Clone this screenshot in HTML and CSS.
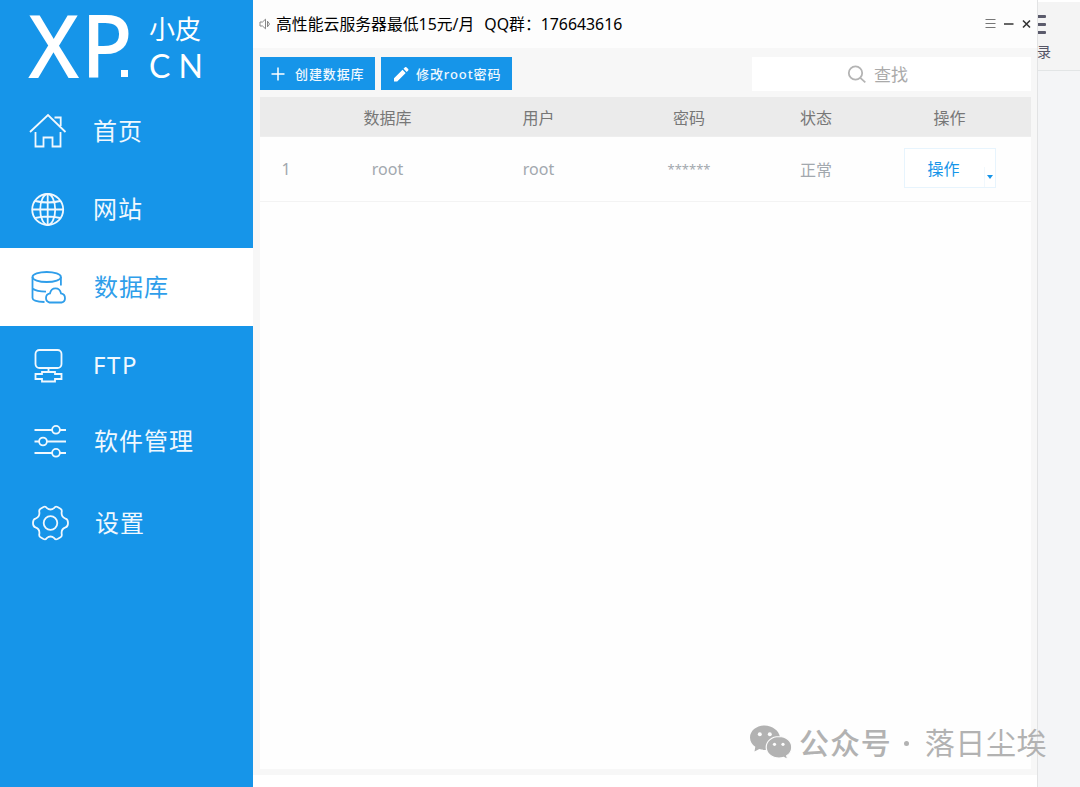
FILE: index.html
```html
<!DOCTYPE html>
<html lang="zh-CN">
<head>
    <meta charset="UTF-8">
    <meta name="viewport" content="width=device-width, initial-scale=1.0">
    <title>小皮面板 - 数据库</title>
    <link rel="stylesheet" href="styles.css">
</head>
<body>

<div class="screen">
    <aside class="sidebar">
        <div class="logo">
            <div class="logo-main"><span class="logo-xp">XP</span><span class="logo-dot"></span></div>
            <div class="logo-side">
                <span class="logo-cn">小皮</span>
                <span class="logo-en">CN</span>
            </div>
        </div>
        <nav class="menu">
            <a class="menu-item">
                <svg class="icon" width="40" height="40" viewBox="0 0 40 40">
                    <path d="M2 21 20 4l17.500 17M26.500 6.500h6.200v8.500M7.500 21v14.500h8v-9h9v9h8v-14.500"/>
                </svg>
                <span>首页</span>
            </a>
            <a class="menu-item">
                <svg class="icon" width="40" height="40" viewBox="0 0 40 40">
                    <circle cx="19.700" cy="20.500" r="15.500"/>
                    <ellipse cx="19.700" cy="20.500" rx="7.500" ry="15.500"/>
                    <path d="M19.700 5v31M4.200 20.500h31M7.200 12q12.500 3 25 0M7.200 29q12.500-3 25 0"/>
                </svg>
                <span>网站</span>
            </a>
            <a class="menu-item active">
                <svg class="icon" width="40" height="40" viewBox="0 0 40 40">
                    <ellipse cx="18.700" cy="10" rx="14.200" ry="5"/>
                    <path d="M4.500 10v21q0 3.500 12 4M32.900 10v8.500M4.500 21.500q4 3 13.500 3.200M21.500 35.500q-3.500-.8-3.500-4.400 0-4 4-4.700 1-5 5.500-5t5.500 5q4 .7 4 4.800 0 3.500-3.500 4.300z"/>
                </svg>
                <span>数据库</span>
            </a>
            <a class="menu-item menu-ftp">
                <svg class="icon" width="40" height="40" viewBox="0 0 40 40">
                    <rect x="7.500" y="4" width="26" height="18" rx="4"/>
                    <path d="M20.500 22v4M14 26h13v2h6.500v5h-6.500v2.500h-13v-2.500h-6.500v-5h6.500z"/>
                </svg>
                <span>FTP</span>
            </a>
            <a class="menu-item menu-soft">
                <svg class="icon" width="40" height="40" viewBox="0 0 40 40">
                    <path d="M6.500 8h17.500M32 8h6M6.500 19.500h4.500M19 19.500h19M6.500 31h17.500M32 31h6"/>
                    <circle cx="28" cy="7.800" r="3.900"/>
                    <circle cx="15" cy="19.500" r="3.900"/>
                    <circle cx="28" cy="30.800" r="3.900"/>
                </svg>
                <span>软件管理</span>
            </a>
            <a class="menu-item menu-set">
                <svg class="icon" width="42" height="40" viewBox="0 0 42 40">
                    <path d="M15.500 4q2-1 3.200.8 3.800 3.400 7.600 0 1.200-1.800 3.200-.8l3 1.700q1.700 1 1.200 3.200-.8 5 3.800 6.700 2.500.6 2.500 4.400t-2.500 4.400q-4.600 1.700-3.800 6.700.5 2.200-1.200 3.200l-3 1.700q-2 1-3.200-.8-3.800-3.400-7.600 0-1.200 1.800-3.200.8l-3-1.700q-1.700-1-1.200-3.200.8-5-3.800-6.700-2.500-.6-2.500-4.400t2.500-4.400q4.600-1.700 3.800-6.700-.5-2.200 1.200-3.200z"/>
                    <circle cx="22.500" cy="20" r="6.800"/>
                </svg>
                <span>设置</span>
            </a>
        </nav>
    </aside>

    <main class="window">
        <header class="titlebar">
            <svg class="speaker" width="12" height="12" viewBox="0 0 12 12">
                <path d="M1 4h2.500L6.500 1.200v9.600L3.500 8H1zM8.500 3v6M8.500 3.200l2 2.800-2 2.800"/>
            </svg>
            <p class="notice">高性能云服务器最低15元/月<span class="qq">QQ群：176643616</span></p>
            <svg class="controls" width="46" height="12" viewBox="0 0 46 12">
                <path d="M.5 1.500h10M.5 5.500h10M.5 9.500h10" stroke="#777"/>
                <path d="M19 6h9.500" stroke="#333" stroke-width="1.500"/>
                <path d="M38 2.500l7 7M45 2.500l-7 7" stroke="#333" stroke-width="1.600"/>
            </svg>
        </header>

        <section class="content">
            <div class="toolbar">
                <button class="button create">
                    <svg width="14" height="14" viewBox="0 0 14 14"><path d="M7 .5v13M.5 7h13" stroke="#fff" stroke-width="1.500"/></svg>
                    <span>创建数据库</span>
                </button>
                <button class="button password">
                    <svg width="16" height="16" viewBox="0 0 16 16"><path d="M1 15.500v-3.200L9.500 3.800l3.200 3.200L4.200 15.500zM10.500 2.800 12 1.300q.7-.6 1.400 0l1.800 1.800q.6.700 0 1.400l-1.500 1.500z" fill="#fff"/></svg>
                    <span>修改root密码</span>
                </button>
                <div class="search">
                    <svg width="20" height="20" viewBox="0 0 20 20" fill="none" stroke="#b4b4b4" stroke-width="1.800"><circle cx="8.500" cy="9" r="6.700"/><path d="m13.300 13.800 5 4.500"/></svg>
                    <span>查找</span>
                </div>
            </div>

            <div class="table">
                <div class="row head">
                    <span></span>
                    <span>数据库</span>
                    <span>用户</span>
                    <span>密码</span>
                    <span>状态</span>
                    <span>操作</span>
                </div>
                <div class="row">
                    <span>1</span>
                    <span>root</span>
                    <span>root</span>
                    <span class="stars">******</span>
                    <span>正常</span>
                    <button class="action">操作<i class="drop"></i></button>
                </div>
            </div>
        </section>
        <div class="window-foot"></div>
    </main>

    <div class="behind">
        <div class="behind-head">
            <div class="bars"><i></i><i></i><i></i></div>
            <span>录</span>
        </div>
    </div>

    <div class="watermark">
        <svg width="42" height="36" viewBox="0 0 42 36">
            <path fill="#b2b2b2" d="M14.500.5C6.500.5 0 5.800 0 12.500c0 3.800 2 7 5.300 9.300L4.500 26.500 9.300 24c2 .7 4 .9 6.500.9L30 12C29 5.700 22.300.5 14.500.5z"/>
            <path fill="#b2b2b2" stroke="#fdfdfd" stroke-width="1.200" d="M29 11.500c-7.200 0-12.800 4.700-12.800 10.700S21.800 33 29 33c1.700 0 3.200-.2 4.600-.7l4.100 2.300-1-3.800c3.100-2 5-5 5-8.600 0-6-5.500-10.700-12.700-10.700z"/>
            <g fill="#fdfdfd"><circle cx="9.800" cy="9.200" r="2"/><circle cx="19.800" cy="9.200" r="2"/><circle cx="24.500" cy="19.300" r="1.600"/><circle cx="33" cy="19.300" r="1.600"/></g>
        </svg>
        <span class="wm-type">公众号</span>
        <span class="wm-sep"></span>
        <span class="wm-name">落日尘埃</span>
    </div>
</div>

</body>
</html>
```

FILE: styles.css
```css
* {
    margin: 0;
    padding: 0;
    box-sizing: border-box;
}

body {
    background-color: #fff;
    font-family: "Noto Sans", "Noto Sans CJK SC", sans-serif;
    font-size: 16px;
    overflow: hidden;
}

.screen {
    position: relative;
    display: flex;
    width: 1080px;
    height: 787px;
}

/* sidebar */
.sidebar {
    width: 253px;
    background-color: #1695e9;
    color: #fff;
}

.logo {
    display: flex;
    height: 92px;
    padding-left: 28px;
}

.logo-main {
    display: flex;
    width: 121px;
}

.logo-xp {
    width: 105px;
    font-family: "Noto Sans", sans-serif;
    font-size: 88px;
    font-weight: 500;
    line-height: 88px;
    letter-spacing: 2px;
    transform: scaleX(0.955);
    transform-origin: left;
}

.logo-dot {
    align-self: flex-start;
    width: 7px;
    height: 7px;
    margin: 70px 0 0 -12px;
    background-color: #fff;
}

.logo-side {
    display: flex;
    flex-direction: column;
    padding-top: 11px;
    line-height: 36px;
}

.logo-cn {
    font-size: 26px;
}

.logo-en {
    font-family: Lato, sans-serif;
    font-size: 32px;
    line-height: 38px;
    letter-spacing: 8px;
}

.menu-item {
    display: flex;
    align-items: center;
    height: 78px;
    padding-left: 28px;
    font-size: 24px;
    letter-spacing: 1px;
    color: #f0f8fe;
}

.menu-item span {
    margin-left: 25px;
    padding-bottom: 4px;
}

.menu-item.active {
    background-color: #fff;
    color: #2f9eea;
}

.menu-item.active span {
    margin-left: 26px;
}

.menu-ftp {
    height: 79px;
}

.menu-ftp span {
    padding-bottom: 2px;
    letter-spacing: 1.6px;
}

.menu-soft {
    height: 73px;
}

.menu-soft span {
    margin-left: 26px;
}

.menu-set {
    height: 90px;
}

.icon {
    fill: none;
    stroke: currentColor;
    stroke-width: 1.8;
}

/* main window */
.window {
    display: flex;
    flex-direction: column;
    width: 785px;
    height: 787px;
    background-color: #f7f7f7;
    border-right: 1px solid #e2e3e4;
}

.window-foot {
    height: 12px;
    background-color: #fff;
}

.titlebar {
    display: flex;
    align-items: center;
    height: 48px;
    padding: 0 6px;
    background-color: #fdfdfd;
}

.speaker {
    fill: none;
    stroke: #888;
    stroke-width: 1;
}

.notice {
    flex: 1;
    margin-left: 5px;
    padding-bottom: 2px;
    font-size: 15.85px;
    color: #000;
}

.qq {
    margin-left: 10px;
}

.controls {
    fill: none;
}

.content {
    flex: 1;
    display: flex;
    flex-direction: column;
    padding: 9px 6px 6px 7px;
}

.toolbar {
    display: flex;
    gap: 6px;
    height: 34px;
    margin-bottom: 6px;
}

.button {
    display: flex;
    align-items: center;
    height: 33px;
    border: none;
    background-color: #1695e9;
    color: #f0f8fe;
    font-family: inherit;
    font-size: 13px;
    font-weight: 500;
    letter-spacing: 0.9px;
}

.create {
    width: 115px;
    padding-left: 11px;
    gap: 10px;
}

.password {
    width: 131px;
    padding-left: 12px;
    gap: 7px;
}

.search {
    display: flex;
    justify-content: center;
    align-items: center;
    gap: 7px;
    width: 279px;
    margin-left: auto;
    padding-right: 28px;
    background-color: #fff;
    color: #aaa;
    font-size: 17px;
}

.search span {
    padding-bottom: 2px;
}

.table {
    flex: 1;
    background-color: #fefefe;
}

.row {
    display: grid;
    grid-template-columns: 52px 151px 151px 150px 104px 163px;
    align-items: center;
    justify-items: center;
    height: 65px;
    border-bottom: 1px solid #f3f3f3;
    color: #a2a8ae;
}

.row.head {
    height: 40px;
    background-color: #ebebeb;
    border-bottom-color: #eee;
    color: #777;
}

.stars {
    font-size: 13px;
}

.action {
    position: relative;
    width: 92px;
    height: 40px;
    margin-bottom: 2px;
    padding: 0 12px 0 0;
    border: 1px solid #e7f4fd;
    background-color: #fff;
    color: #1695e9;
    font-family: inherit;
    font-size: 16px;
}

.drop {
    position: absolute;
    right: 0;
    bottom: 0;
    width: 11px;
    height: 20px;
    border-left: 1px solid #f1f8fd;
}

.drop::after {
    content: "";
    position: absolute;
    left: 2px;
    top: 8px;
    border: 3px solid transparent;
    border-top: 4px solid #1695e9;
    border-bottom: none;
}

/* page showing behind the window */
.behind {
    flex: 1;
    padding-top: 2px;
    background: linear-gradient(#fff 2px, #f4f5f7 2px);
}

.behind-head {
    height: 69px;
    padding-top: 13px;
    background-color: #f4f4f4;
    border-bottom: 1px solid #e2e5e6;
    color: #555566;
    font-size: 14px;
    line-height: 20px;
}

.behind-head span {
    display: block;
    margin: 8px 0 0 -1px;
}

.bars {
    display: flex;
    flex-direction: column;
    gap: 5px;
}

.bars i {
    width: 8px;
    height: 3px;
    background-color: #5a5a6b;
    border-radius: 0 1px 1px 0;
}

.watermark {
    position: absolute;
    left: 750px;
    top: 725px;
    display: flex;
    align-items: center;
    height: 36px;
    color: #b2b2b2;
    font-size: 30px;
    line-height: 36px;
    white-space: nowrap;
}

.wm-type {
    margin-left: 7px;
    font-weight: 500;
    letter-spacing: 0.9px;
}

.wm-sep {
    width: 5px;
    height: 5px;
    margin: 0 16px 0 12px;
    border-radius: 50%;
    background-color: #b2b2b2;
}

.wm-name {
    letter-spacing: 0.6px;
}
```
